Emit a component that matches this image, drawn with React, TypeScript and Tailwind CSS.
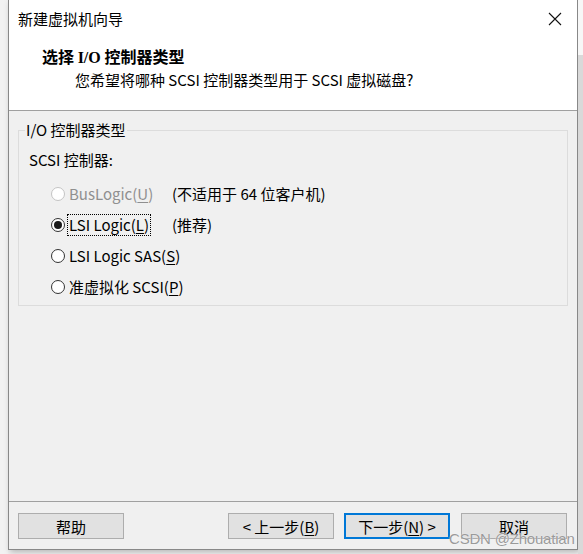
import React from 'react';

const FONT = '"Noto Sans CJK SC", "Liberation Sans", sans-serif';

function Mn({ children }: { children: React.ReactNode }) {
    return <span className="underline underline-offset-2 decoration-1">{children}</span>;
}

interface RadioProps {
    checked?: boolean;
    disabled?: boolean;
    focused?: boolean;
    label: React.ReactNode;
    note?: string;
}

function Radio({ checked, disabled, focused, label, note }: RadioProps) {
    return (
        <div className="h-[31px] flex items-center">
            <span
                className={`ml-[22px] w-[14px] h-[14px] rounded-full border bg-white flex items-center justify-center shrink-0 ${
                    disabled ? 'border-[#c4c4c4]' : 'border-[#333333]'
                }`}
            >
                {checked && <span className="w-[8px] h-[8px] rounded-full bg-[#1a1a1a]" />}
            </span>
            <span
                className={`ml-[3px] w-[104px] shrink-0 flex ${disabled ? 'text-[#8f8f8f]' : 'text-black'}`}
            >
                <span className={`px-[1px] ${focused ? 'outline outline-1 outline-dotted outline-black' : ''}`}>
                    {label}
                </span>
            </span>
            {note && <span className="text-black">{note}</span>}
        </div>
    );
}

function Btn({ children, primary }: { children: React.ReactNode; primary?: boolean }) {
    return (
        <button
            className={`w-[106px] h-[26px] bg-[#e1e1e1] text-[15px] leading-none text-black flex items-center justify-center ${
                primary ? 'border-2 border-[#0078d7]' : 'border border-[#adadad]'
            }`}
        >
            {children}
        </button>
    );
}

export default function App() {
    return (
        <div
            className="w-[583px] h-[554px] bg-[#f0f0f0] flex relative overflow-hidden"
            style={{ fontFamily: FONT }}
        >
            <div className="w-[8px] shrink-0 bg-[#f2f2f2]" />

            <div className="w-[570px] h-[550px] shrink-0 flex flex-col bg-[#f0f0f0] border-x border-b border-[#888888] shadow-[2px_2px_6px_rgba(0,0,0,0.25)]">
                <div className="h-[111px] bg-white border-b border-[#a0a0a0] shrink-0">
                    <div className="h-[38px] flex items-center justify-between pl-[9px] pr-[14px]">
                        <span className="text-[15px] leading-[20px] text-black">新建虚拟机向导</span>
                        <svg width="14" height="14" viewBox="0 0 14 14" className="mr-[1px]">
                            <path d="M1 1 L13 13 M13 1 L1 13" stroke="#111" strokeWidth="1.1" fill="none" />
                        </svg>
                    </div>
                    <div className="pt-[7px] pl-[33px]">
                        <div className="text-[16px] leading-[22px] font-bold text-black">
                            选择 <span style={{ fontFamily: '"Liberation Serif", serif' }}>I/O</span> 控制器类型
                        </div>
                        <div className="pl-[33px] text-[15px] leading-[22px] text-black">
                            您希望将哪种 SCSI 控制器类型用于 SCSI 虚拟磁盘?
                        </div>
                    </div>
                </div>

                <div className="flex-1 px-[9px]">
                    <fieldset className="mt-[9px] border border-[#dcdcdc] pl-[10px] pr-[10px] pb-[3px]">
                        <legend className="ml-[-4px] px-[1px] text-[15px] leading-[20px] text-black">
                            I/O 控制器类型
                        </legend>
                        <div className="mt-[10px] text-[15px] leading-[20px] text-black">SCSI 控制器:</div>
                        <div className="mt-[8px] text-[15px] leading-[20px]">
                            <Radio
                                disabled
                                label={
                                    <>
                                        BusLogic(<Mn>U</Mn>)
                                    </>
                                }
                                note="(不适用于 64 位客户机)"
                            />
                            <Radio
                                checked
                                focused
                                label={
                                    <>
                                        LSI Logic(<Mn>L</Mn>)
                                    </>
                                }
                                note="(推荐)"
                            />
                            <Radio
                                label={
                                    <span className="whitespace-nowrap">
                                        LSI Logic SAS(<Mn>S</Mn>)
                                    </span>
                                }
                            />
                            <Radio
                                label={
                                    <span className="whitespace-nowrap">
                                        准虚拟化 SCSI(<Mn>P</Mn>)
                                    </span>
                                }
                            />
                        </div>
                    </fieldset>
                </div>

                <div className="h-[48px] shrink-0 border-t border-[#a0a0a0] flex items-start pt-[11px] pl-[9px]">
                    <Btn>帮助</Btn>
                    <div className="ml-[104px] flex gap-[10px]">
                        <Btn>
                            &lt; 上一步(<Mn>B</Mn>)
                        </Btn>
                        <Btn primary>
                            下一步(<Mn>N</Mn>) &gt;
                        </Btn>
                        <div className="ml-[1px]">
                            <Btn>取消</Btn>
                        </div>
                    </div>
                </div>
            </div>

            <div className="flex-1 flex flex-col">
                <div className="h-[55px] bg-[#f7f7f7]" />
                <div className="flex-1 bg-[#d9d9d9]" />
            </div>

            <span
                className="absolute left-[449px] top-[530px] text-[15px] leading-[18px] text-[#9a9a9a] tracking-[-0.2px]"
                style={{ fontFamily: '"Liberation Sans", sans-serif', textShadow: '0 0 1px #fff' }}
            >
                CSDN @Zhouatian
            </span>
        </div>
    );
}
